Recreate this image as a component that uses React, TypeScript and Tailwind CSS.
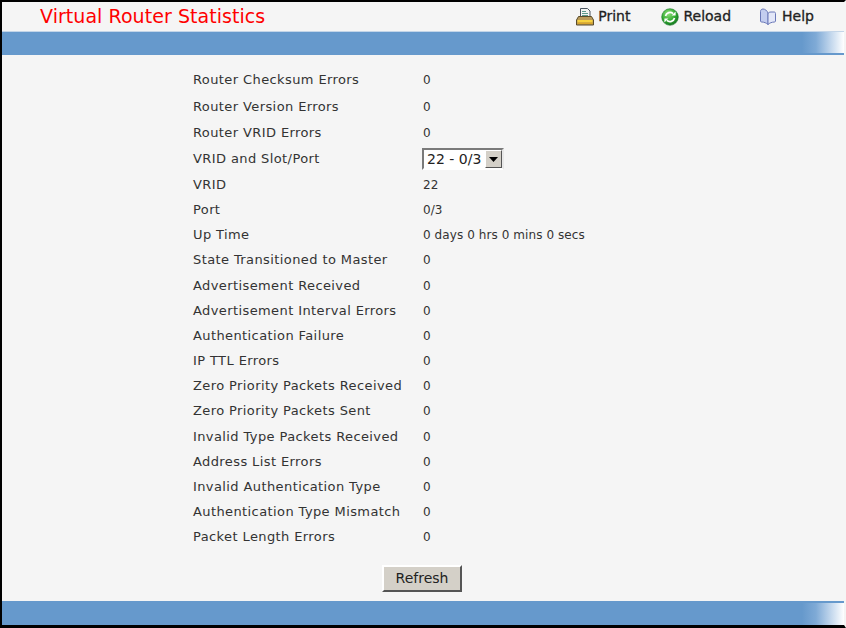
const rows: [string, string, string][] = [
  ["Router Checksum Errors", "0", "h-[28px]"],
  ["Router Version Errors", "0", "h-[26px]"],
  ["Router VRID Errors", "0", "h-[26px]"],
  ["VRID and Slot/Port", "select", "h-[26px]"],
  ["VRID", "22", "h-[25px]"],
  ["Port", "0/3", "h-[25px]"],
  ["Up Time", "0 days 0 hrs 0 mins 0 secs", "h-[25px]"],
  ["State Transitioned to Master", "0", "h-[26px]"],
  ["Advertisement Received", "0", "h-[25px]"],
  ["Advertisement Interval Errors", "0", "h-[25px]"],
  ["Authentication Failure", "0", "h-[25px]"],
  ["IP TTL Errors", "0", "h-[25px]"],
  ["Zero Priority Packets Received", "0", "h-[25px]"],
  ["Zero Priority Packets Sent", "0", "h-[26px]"],
  ["Invalid Type Packets Received", "0", "h-[25px]"],
  ["Address List Errors", "0", "h-[25px]"],
  ["Invalid Authentication Type", "0", "h-[25px]"],
  ["Authentication Type Mismatch", "0", "h-[25px]"],
  ["Packet Length Errors", "0", "h-[25px]"],
];

function Gradient() {
  return (
    <div className="flex">
      <div className="w-[14px] bg-gradient-to-r from-[#6699cc] to-[#7faad6]" />
      <div className="w-[28px] bg-gradient-to-r from-[#7faad6] to-[#ffffff]" />
    </div>
  );
}

function TopBar() {
  return (
    <div className="h-[24px] flex justify-between border-t border-[#c3d5e8] border-b-2 border-b-[#6699cc] bg-[#6699cc]">
      <div />
      <Gradient />
    </div>
  );
}

function BottomBar() {
  return (
    <div className="h-[24px] flex justify-between border-t-2 border-[#6699cc] bg-[#6699cc]">
      <div />
      <Gradient />
    </div>
  );
}

function PrintIcon() {
  return (
    <svg width="18" height="18" viewBox="0 0 18 18">
      <path d="M4.500 .5h7l2.500 2.500v6.500h-9.500z" fill="#f2f4f2" stroke="#4a5560" strokeWidth="1" />
      <path d="M6 3.500h4M6 5.500h6M6 7.500h6" stroke="#5c9a8c" strokeWidth="1" />
      <path d="M2.500 8.500h13l2 3.500v5H.5v-5z" fill="#b89a5a" stroke="#5a4c2a" strokeWidth="1" />
      <path d="M1.500 12h15v2.500h-15z" fill="#f7d23e" />
      <path d="M1.500 14.500h15v1.500h-15z" fill="#d9a52a" />
    </svg>
  );
}

function ReloadIcon() {
  return (
    <svg width="18" height="18" viewBox="0 0 18 18">
      <defs>
        <radialGradient id="g" cx="40%" cy="30%" r="75%">
          <stop offset="0%" stopColor="#8fe07a" />
          <stop offset="60%" stopColor="#2fa82f" />
          <stop offset="100%" stopColor="#12701f" />
        </radialGradient>
      </defs>
      <circle cx="9" cy="9" r="8.300" fill="url(#g)" stroke="#1b7a2a" strokeWidth="0.6" />
      <path d="M4.500 8a4.600 4.600 0 0 1 7.600-2.400" fill="none" stroke="#fff" strokeWidth="1.700" />
      <path d="M10.600 7.400h4V3.400z" fill="#fff" />
      <path d="M13.500 10a4.600 4.600 0 0 1-7.600 2.400" fill="none" stroke="#fff" strokeWidth="1.700" />
      <path d="M7.400 10.600h-4v4z" fill="#fff" />
    </svg>
  );
}

function HelpIcon() {
  return (
    <svg width="18" height="18" viewBox="0 0 18 18">
      <path d="M1.500 3.500c0-1.500 1-2.500 2.500-2.500 2 0 4 1.500 5 4v11.500c-1.500-1.500-4-2.500-6.500-2.500-.6 0-1-.5-1-1z" fill="#c3cdef" stroke="#6a78b8" strokeWidth="1" />
      <path d="M9 16.500c1.500-1.500 4-2.500 6.500-2.500.6 0 1-.5 1-1V5.500c0-1-.5-1.500-1.500-1.500h-3c-1.500 0-3 .5-3 2z" fill="#e3e7f8" stroke="#6a78b8" strokeWidth="1" />
    </svg>
  );
}

function Select() {
  return (
    <div className="w-[82px] h-[22px] -ml-[1px] flex items-center border-2 border-t-[#7a7a7a] border-l-[#7a7a7a] border-r-[#e8e8e8] border-b-[#ffffff] bg-white">
      <span className="flex-1 pl-[3px] text-[14px] leading-none text-[#222]">22 - 0/3</span>
      <span className="w-[17px] h-[18px] flex items-center justify-center bg-[#d4d0c8] border border-t-white border-l-white border-r-[#555] border-b-[#555]">
        <svg width="9" height="5" viewBox="0 0 9 5"><path d="M0 0h9L4.500 5z" fill="#000" /></svg>
      </span>
    </div>
  );
}

export default function App() {
  return (
    <div className="w-[846px] h-[628px] flex flex-col border-t-2 border-l-2 border-r-2 border-b-[3px] border-t-black border-l-black border-r-[#f5f5f5] border-b-black bg-[#f5f5f5] font-['DejaVu_Sans',sans-serif] text-[#333] overflow-hidden">
      <header className="h-[29px] flex items-center">
        <h1 className="ml-[38px] flex-1 text-[19px] leading-none tracking-[0.05px] text-[#ff0000]">Virtual Router Statistics</h1>
        <div className="flex items-center gap-[4px] mr-[31px] text-[14px] text-[#222] [-webkit-text-stroke:0.3px_#222]"><PrintIcon /><span>Print</span></div>
        <div className="flex items-center gap-[4px] mr-[28px] text-[14px] text-[#222] [-webkit-text-stroke:0.3px_#222]"><ReloadIcon /><span>Reload</span></div>
        <div className="flex items-center gap-[5px] mr-[30px] text-[14px] text-[#222] [-webkit-text-stroke:0.3px_#222]"><HelpIcon /><span>Help</span></div>
      </header>
      <TopBar />
      <main className="flex-1 flex flex-col pl-[191px] pt-[11px]">
        {rows.map(([label, value, h]) => (
          <div key={label} className={`${h} flex items-center`}>
            <div className="w-[230px] text-[13px] tracking-[0.4px] text-[#333]">{label}</div>
            {value === "select" ? <Select /> : <div className="text-[12px] tracking-[0.08px] text-[#333]">{value}</div>}
          </div>
        ))}
        <div className="mt-[16px] ml-[189px]">
          <button className="w-[80px] h-[27px] bg-[#d4d0c8] border-2 border-t-white border-l-white border-r-[#555] border-b-[#555] text-[14px] text-[#222]">Refresh</button>
        </div>
      </main>
      <BottomBar />
    </div>
  );
}
